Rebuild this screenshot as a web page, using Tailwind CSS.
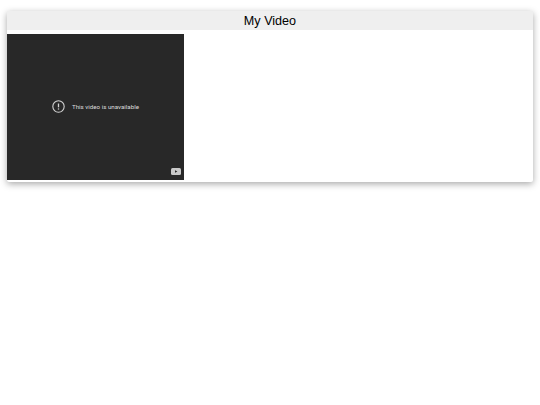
<!DOCTYPE html>
<html lang="en">
<head>
    <meta charset="UTF-8">
    <title>My Video</title>
    <script src="https://cdn.jsdelivr.net/npm/@tailwindcss/browser@4"></script>
</head>
<body class="bg-white min-h-screen font-['Liberation_Sans',Arial,sans-serif]">
    <div class="pt-[11px] px-[7px] pb-[20px]">
        <!-- Card -->
        <div class="bg-white rounded-[2px] shadow-[0_2px_7px_rgba(0,0,0,0.35)] h-[171px]">
            <h1 class="h-[19px] bg-[#efefef] text-center text-[12.6px] leading-[20px] text-black">My Video</h1>
            <!-- Video player -->
            <div class="relative mt-[4px] w-[177px] h-[146px] bg-[#282828] flex items-center justify-center">
                <div class="flex items-center gap-[7px] pb-[1px]">
                    <svg class="w-[13px] h-[13px]" viewBox="0 0 24 24" fill="none">
                        <circle cx="12" cy="12" r="10.5" stroke="#d4d4d4" stroke-width="2"/>
                        <path d="M12 6.5v7" stroke="#d4d4d4" stroke-width="2.4"/>
                        <path d="M12 15.5v2.2" stroke="#d4d4d4" stroke-width="2.4"/>
                    </svg>
                    <span class="text-[6.2px] leading-[8px] text-[#dcdcdc] font-['Roboto',sans-serif] whitespace-nowrap">This video is unavailable</span>
                </div>
                <!-- YouTube mark -->
                <svg class="absolute right-[3px] bottom-[5px] w-[10px] h-[7px]" viewBox="0 0 10 7">
                    <rect width="10" height="7" rx="1.5" fill="#c8c8c8"/>
                    <path d="M4 2.2v2.6l2.4-1.3z" fill="#282828"/>
                </svg>
            </div>
        </div>
    </div>
</body>
</html>
